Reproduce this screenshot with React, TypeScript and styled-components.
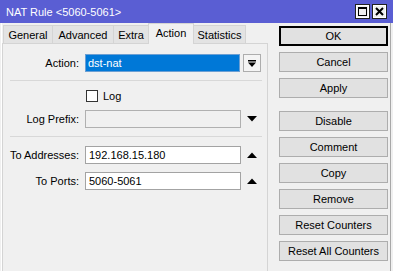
import React from "react";
import styled, { createGlobalStyle, css } from "styled-components";

const GlobalStyle = createGlobalStyle`
  html, body { margin: 0; padding: 0; background: #f0f0f0; }
  body { font-family: "Liberation Sans", Arial, sans-serif; font-size: 11px; color: #000; }
  * { box-sizing: border-box; }
`;

const Window = styled.div`
  width: 393px;
  height: 271px;
  overflow: hidden;
  display: flex;
  flex-direction: column;
  background: #f0f0f0;
`;

const TitleBar = styled.div`
  height: 23px;
  flex: none;
  display: flex;
  align-items: center;
  padding: 0 6px 0 6px;
  background: #5a5ed3;
  color: #fff;
  font-size: 11px;
`;

const Title = styled.div`
  flex: 1;
  padding-top: 1px;
`;

const TitleButtons = styled.div`
  display: flex;
  gap: 2px;
  margin-top: -1px;
`;

const TitleButton = styled.div`
  width: 15px;
  height: 15px;
  background: #f0f0f0;
  border: 1px solid #202020;
  box-shadow: inset 0 0 0 1px #fff;
  display: flex;
  align-items: center;
  justify-content: center;
`;

const Content = styled.div`
  flex: 1;
  display: flex;
  padding-left: 2px;
  box-shadow: inset 1px 0 #f0f0f0, inset 2px 0 #fff, inset -2px 0 #f0f0f0, inset -3px 0 #a8a8a8;
`;

const LeftPane = styled.div`
  width: 266px;
  display: flex;
  flex-direction: column;
`;

const TabRow = styled.div`
  height: 20px;
  display: flex;
  align-items: flex-end;
  padding-left: 1px;
`;

const Tab = styled.div<{ $w: number; $active?: boolean }>`
  width: ${(p) => p.$w}px;
  height: 18px;
  display: flex;
  align-items: center;
  justify-content: center;
  font-size: 11px;
  background: #e3e3e3;
  border: 1px solid #d4d4d4;
  border-bottom: none;
  margin-right: -1px;
  padding-top: 1px;
  ${(p) =>
    p.$active &&
    css`
      height: 21px;
      background: #f0f0f0;
      margin-bottom: -1px;
      position: relative;
      z-index: 1;
      padding-top: 0;
      padding-bottom: 2px;
    `}
`;

const Panel = styled.div`
  flex: 1;
  border: 1px solid #d4d4d4;
  border-bottom: none;
  background: #f0f0f0;
  padding-top: 10px;
  display: flex;
  flex-direction: column;
`;

const FormRow = styled.div<{ $mt?: number }>`
  display: flex;
  align-items: center;
  height: 18px;
  margin-top: ${(p) => p.$mt ?? 0}px;
`;

const Label = styled.div`
  width: 76px;
  margin-right: 6px;
  text-align: right;
  white-space: nowrap;
`;

const Field = styled.div<{ $variant?: "selected" | "disabled" | "normal" }>`
  width: 156px;
  height: 18px;
  border: 1px solid #a3a3a3;
  background: #fff;
  padding-left: 3px;
  display: flex;
  align-items: center;
  white-space: nowrap;
  ${(p) =>
    p.$variant === "selected" &&
    css`
      background: #0078d7;
      border-color: #6b9fd3;
      color: #fff;
      width: 155px;
      padding-left: 2px;
    `}
  ${(p) =>
    p.$variant === "disabled" &&
    css`
      background: #f0f0f0;
      border-color: #b0b0b0;
    `}
`;

const Trailing = styled.div`
  width: 22px;
  height: 18px;
  display: flex;
  align-items: center;
  justify-content: center;
`;

const DropButton = styled.div`
  width: 18px;
  height: 18px;
  margin-left: 3px;
  border: 1px solid #adadad;
  background: #f4f4f4;
  display: flex;
  align-items: center;
  justify-content: center;
`;

const Separator = styled.div<{ $mt: number }>`
  height: 1px;
  background: #d8d8d8;
  margin: ${(p) => p.$mt}px 5px 0 7px;
`;

const CheckRow = styled.div<{ $mt: number }>`
  display: flex;
  align-items: center;
  height: 12px;
  margin-top: ${(p) => p.$mt}px;
  padding-left: 83px;
  gap: 5px;
`;

const CheckBox = styled.div`
  width: 12px;
  height: 12px;
  border: 1px solid #333;
  background: #fff;
`;

const ButtonColumn = styled.div`
  width: 109px;
  margin-left: 11px;
  padding-top: 3px;
  display: flex;
  flex-direction: column;
`;

const Button = styled.div<{ $default?: boolean; $mt?: number }>`
  height: 20px;
  margin-top: ${(p) => p.$mt ?? 6}px;
  border: 1px solid #adadad;
  background: #e1e1e1;
  display: flex;
  align-items: center;
  justify-content: center;
  font-size: 11px;
  ${(p) =>
    p.$default &&
    css`
      border-color: #000;
      box-shadow: inset 0 0 0 1px #000;
      background: #e1e1e1;
    `}
`;

const DownArrow = () => (
  <svg width="10" height="6" viewBox="0 0 10 6">
    <polygon points="0,0 10,0 5,5.5" fill="#000" />
  </svg>
);

const UpArrow = () => (
  <svg width="10" height="6" viewBox="0 0 10 6">
    <polygon points="0,6 10,6 5,0.5" fill="#000" />
  </svg>
);

const DropIcon = () => (
  <svg width="8" height="7" viewBox="0 0 8 7">
    <rect x="0" y="0" width="8" height="1.5" fill="#000" />
    <polygon points="0,2.5 8,2.5 4,7" fill="#000" />
  </svg>
);

const MaxIcon = () => (
  <svg width="9" height="9" viewBox="0 0 9 9">
    <rect x="0.5" y="0.5" width="8" height="8" fill="none" stroke="#000" strokeWidth="1" />
    <rect x="0" y="0" width="9" height="2" fill="#000" />
  </svg>
);

const CloseIcon = () => (
  <svg width="9" height="9" viewBox="0 0 9 9">
    <path d="M1 1 L8 8 M8 1 L1 8" stroke="#000" strokeWidth="2" />
  </svg>
);

const tabs = [
  { label: "General", w: 50 },
  { label: "Advanced", w: 62 },
  { label: "Extra", w: 36 },
  { label: "Action", w: 46, active: true },
  { label: "Statistics", w: 53 },
];

const buttons = [
  { label: "OK", def: true, mt: 0 },
  { label: "Cancel" },
  { label: "Apply" },
  { label: "Disable", mt: 13 },
  { label: "Comment" },
  { label: "Copy" },
  { label: "Remove" },
  { label: "Reset Counters" },
  { label: "Reset All Counters" },
];

export default function App() {
  return (
    <>
      <GlobalStyle />
      <Window>
        <TitleBar>
          <Title>NAT Rule &lt;5060-5061&gt;</Title>
          <TitleButtons>
            <TitleButton>
              <MaxIcon />
            </TitleButton>
            <TitleButton>
              <CloseIcon />
            </TitleButton>
          </TitleButtons>
        </TitleBar>
        <Content>
          <LeftPane>
            <TabRow>
              {tabs.map((t) => (
                <Tab key={t.label} $w={t.w} $active={t.active}>
                  {t.label}
                </Tab>
              ))}
            </TabRow>
            <Panel>
              <FormRow>
                <Label>Action:</Label>
                <Field $variant="selected">dst-nat</Field>
                <DropButton>
                  <DropIcon />
                </DropButton>
              </FormRow>
              <Separator $mt={8} />
              <CheckRow $mt={9}>
                <CheckBox />
                <span>Log</span>
              </CheckRow>
              <FormRow $mt={8}>
                <Label>Log Prefix:</Label>
                <Field $variant="disabled" />
                <Trailing>
                  <DownArrow />
                </Trailing>
              </FormRow>
              <Separator $mt={8} />
              <FormRow $mt={9}>
                <Label>To Addresses:</Label>
                <Field>192.168.15.180</Field>
                <Trailing>
                  <UpArrow />
                </Trailing>
              </FormRow>
              <FormRow $mt={8}>
                <Label>To Ports:</Label>
                <Field>5060-5061</Field>
                <Trailing>
                  <UpArrow />
                </Trailing>
              </FormRow>
            </Panel>
          </LeftPane>
          <ButtonColumn>
            {buttons.map((b) => (
              <Button key={b.label} $default={b.def} $mt={b.mt}>
                {b.label}
              </Button>
            ))}
          </ButtonColumn>
        </Content>
      </Window>
    </>
  );
}
